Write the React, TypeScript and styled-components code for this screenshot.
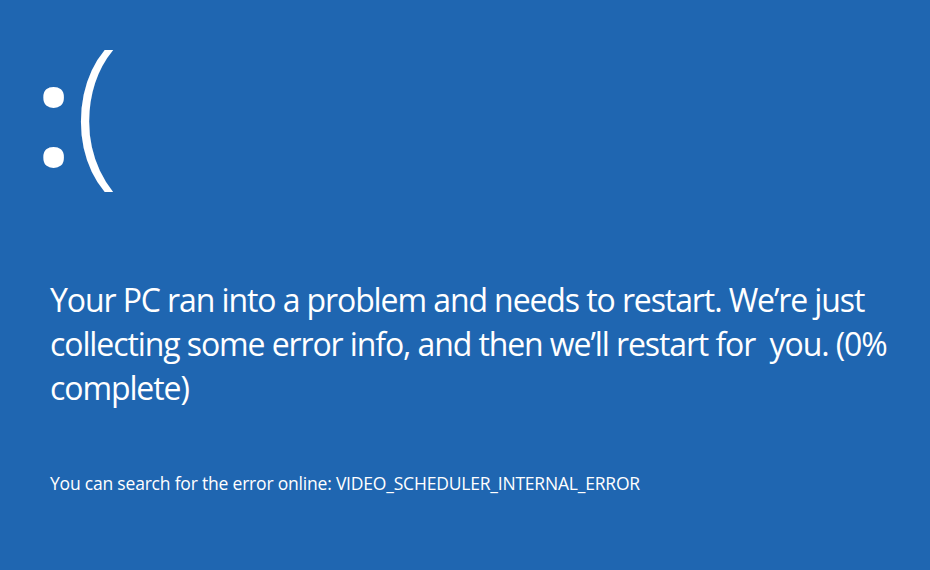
import React from 'react';
import styled, { createGlobalStyle } from 'styled-components';

const GlobalStyle = createGlobalStyle`
  html, body {
    margin: 0;
    padding: 0;
    background: #1f66b1;
  }
  #root {
    min-height: 100vh;
  }
`;

const Screen = styled.div`
  width: 930px;
  height: 570px;
  background: #1f66b1;
  color: #ffffff;
  font-family: 'Open Sans', 'Noto Sans', sans-serif;
  display: flex;
  flex-direction: column;
  padding: 22px 0 0 50px;
  box-sizing: border-box;
  overflow: hidden;
`;

const Face = styled.div`
  display: flex;
  align-items: baseline;
  height: 168px;
  margin-left: -16px;
  line-height: 1;
`;

const Eyes = styled.span`
  font-size: 143px;
  font-weight: 600;
`;

const Mouth = styled.span`
  font-size: 163px;
  font-weight: 300;
  margin-left: 1px;
`;

const Message = styled.p`
  margin: 88px 0 0 0;
  font-size: 32px;
  line-height: 44px;
  letter-spacing: -1.1px;
  white-space: nowrap;
`;

const Hint = styled.p`
  margin: 63px 0 0 0;
  font-size: 17.5px;
  line-height: 20px;
  letter-spacing: -0.2px;
  white-space: nowrap;
`;

function App() {
  return (
    <>
      <GlobalStyle />
      <Screen>
        <Face>
          <Eyes>:</Eyes>
          <Mouth>(</Mouth>
        </Face>
        <Message>
          Your PC ran into a problem and needs to restart. We’re just
          <br />
          collecting some error info, and then we’ll restart for&nbsp; you. (0%
          <br />
          complete)
        </Message>
        <Hint>You can search for the error online: VIDEO_SCHEDULER_INTERNAL_ERROR</Hint>
      </Screen>
    </>
  );
}

export default App;
